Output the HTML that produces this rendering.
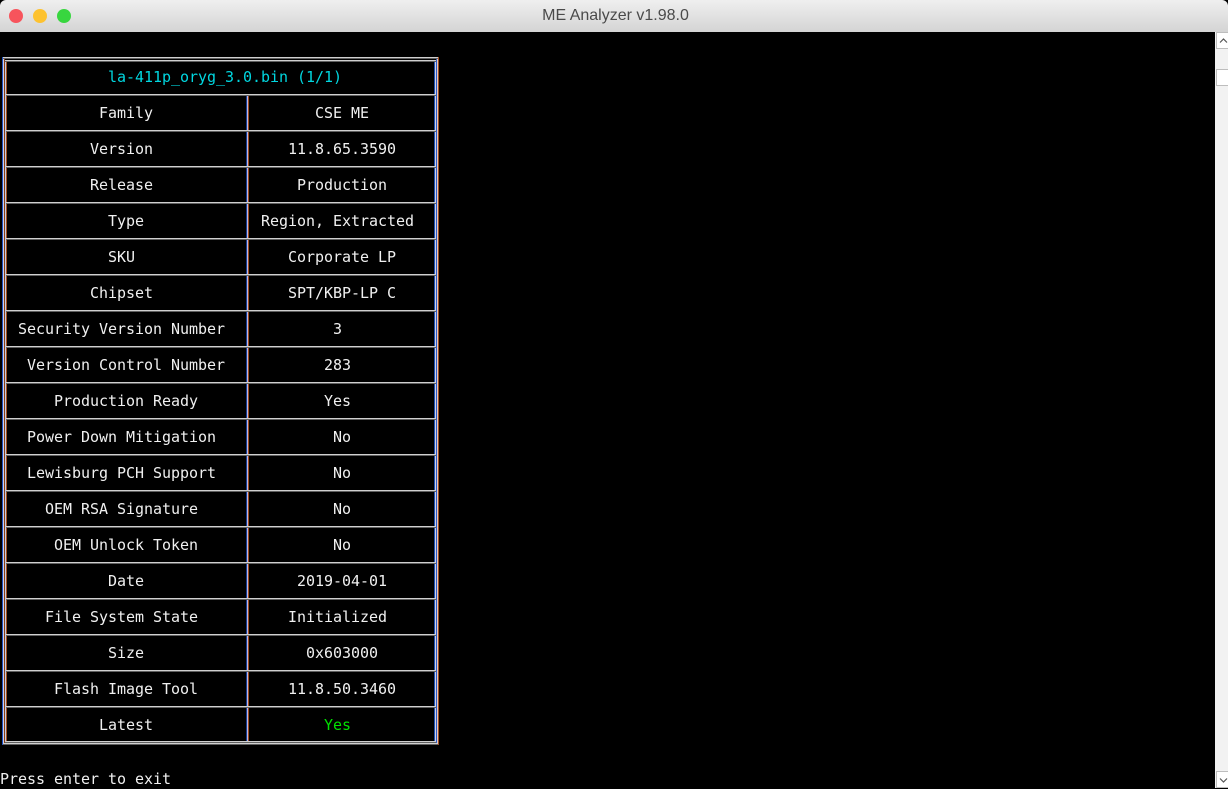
<!DOCTYPE html>
<html>
<head>
<meta charset="utf-8">
<style>
html,body{margin:0;padding:0;background:#000;}
body{position:relative;width:1228px;height:788px;overflow:hidden;}
#tb{position:absolute;left:0;top:0;width:1228px;height:32px;background:linear-gradient(#efefef,#d4d4d4);border-radius:6px 6px 0 0;}
#corner{position:absolute;left:0;top:0;width:1228px;height:32px;background:#000;}
#title{position:absolute;left:0;width:1231px;top:6px;text-align:center;font:16px/20px "Liberation Sans",sans-serif;color:#4a4a4a;}
.dot{position:absolute;top:9px;width:14px;height:14px;border-radius:50%;}
#term{position:absolute;left:0;top:32px;width:1215px;height:756px;background:#000;}
#sb{position:absolute;left:1215px;top:32px;width:13px;height:756px;background:#f2f2f2;}
.btn{position:absolute;left:1px;width:12px;background:#fff;border:1px solid #bdbdbd;border-right:none;box-sizing:border-box;}
.l{position:absolute;height:2px;background:linear-gradient(#d0d0d0 50%,#606060 50%);}
.r{position:absolute;left:6px;width:430px;height:2px;background:linear-gradient(#d0d0d0 50%,#606060 50%);}
.v{position:absolute;width:1px;}
.t{position:absolute;font:15px/20px "DejaVu Sans Mono",monospace;letter-spacing:-0.03px;color:#f0f0f0;white-space:pre;}
</style>
</head>
<body>
<div id="corner"></div>
<div id="tb"></div>
<div id="title">ME Analyzer v1.98.0</div>
<div class="dot" style="left:9px;background:#f7545c"></div>
<div class="dot" style="left:33px;background:#fdc22f"></div>
<div class="dot" style="left:57px;background:#38d63f"></div>
<div id="term"></div>
<div id="sb">
  <div class="btn" style="top:0;height:17px"></div>
  <div class="btn" style="top:37px;height:17px"></div>
  <div class="btn" style="top:739px;height:17px"></div>
  <svg style="position:absolute;left:0;top:0" width="13" height="756">
    <path d="M5 10.5L8.5 7L12 10.5" fill="none" stroke="#555" stroke-width="1.2"/>
    <path d="M5 746.5L8.5 750L12 746.5" fill="none" stroke="#555" stroke-width="1.2"/>
  </svg>
</div>

<!-- outer border -->
<div class="v" style="left:2px;top:57px;height:688px;background:#1f4fc0"></div>
<div class="v" style="left:3px;top:57px;height:688px;background:#d0d0e0"></div>
<div class="v" style="left:4px;top:57px;height:688px;background:#8a3c14"></div>
<div class="v" style="left:5px;top:60px;height:683px;background:#c0cce0"></div>
<div class="v" style="left:6px;top:60px;height:683px;background:#a05024"></div>
<div class="v" style="left:434px;top:60px;height:683px;background:#1f4fb0"></div>
<div class="v" style="left:435px;top:60px;height:683px;background:#d0d0e0"></div>
<div class="v" style="left:436px;top:57px;height:688px;background:#2a58c8"></div>
<div class="v" style="left:437px;top:57px;height:688px;background:#e0c8c0"></div>
<div class="v" style="left:438px;top:57px;height:688px;background:#a04a20"></div>
<div class="l" style="left:3px;top:57px;width:435px"></div>
<div class="l" style="left:3px;top:743px;width:435px"></div>
<div class="l" style="left:5px;top:60px;width:431px"></div>
<div class="l" style="left:5px;top:741px;width:431px"></div>
<!-- middle column -->
<div class="v" style="left:246px;top:95px;height:646px;background:#143a90"></div>
<div class="v" style="left:247px;top:95px;height:646px;background:#b8b8e8"></div>
<div class="v" style="left:248px;top:95px;height:646px;background:#a04a20"></div>
<!-- rows -->
<div class="r" style="top:94px"></div>
<div class="r" style="top:130px"></div>
<div class="r" style="top:166px"></div>
<div class="r" style="top:202px"></div>
<div class="r" style="top:238px"></div>
<div class="r" style="top:274px"></div>
<div class="r" style="top:310px"></div>
<div class="r" style="top:346px"></div>
<div class="r" style="top:382px"></div>
<div class="r" style="top:418px"></div>
<div class="r" style="top:454px"></div>
<div class="r" style="top:490px"></div>
<div class="r" style="top:526px"></div>
<div class="r" style="top:562px"></div>
<div class="r" style="top:598px"></div>
<div class="r" style="top:634px"></div>
<div class="r" style="top:670px"></div>
<div class="r" style="top:706px"></div>

<div class="t" style="left:108px;top:67px;color:#00d7e0">la-411p_oryg_3.0.bin (1/1)</div>
<div class="t" style="left:99px;top:103px">Family</div><div class="t" style="left:315px;top:103px">CSE ME</div>
<div class="t" style="left:90px;top:139px">Version</div><div class="t" style="left:288px;top:139px">11.8.65.3590</div>
<div class="t" style="left:90px;top:175px">Release</div><div class="t" style="left:297px;top:175px">Production</div>
<div class="t" style="left:108px;top:211px">Type</div><div class="t" style="left:261px;top:211px">Region, Extracted</div>
<div class="t" style="left:108px;top:247px">SKU</div><div class="t" style="left:288px;top:247px">Corporate LP</div>
<div class="t" style="left:90px;top:283px">Chipset</div><div class="t" style="left:288px;top:283px">SPT/KBP-LP C</div>
<div class="t" style="left:18px;top:319px">Security Version Number</div><div class="t" style="left:333px;top:319px">3</div>
<div class="t" style="left:27px;top:355px">Version Control Number</div><div class="t" style="left:324px;top:355px">283</div>
<div class="t" style="left:54px;top:391px">Production Ready</div><div class="t" style="left:324px;top:391px">Yes</div>
<div class="t" style="left:27px;top:427px">Power Down Mitigation</div><div class="t" style="left:333px;top:427px">No</div>
<div class="t" style="left:27px;top:463px">Lewisburg PCH Support</div><div class="t" style="left:333px;top:463px">No</div>
<div class="t" style="left:45px;top:499px">OEM RSA Signature</div><div class="t" style="left:333px;top:499px">No</div>
<div class="t" style="left:54px;top:535px">OEM Unlock Token</div><div class="t" style="left:333px;top:535px">No</div>
<div class="t" style="left:108px;top:571px">Date</div><div class="t" style="left:297px;top:571px">2019-04-01</div>
<div class="t" style="left:45px;top:607px">File System State</div><div class="t" style="left:288px;top:607px">Initialized</div>
<div class="t" style="left:108px;top:643px">Size</div><div class="t" style="left:306px;top:643px">0x603000</div>
<div class="t" style="left:54px;top:679px">Flash Image Tool</div><div class="t" style="left:288px;top:679px">11.8.50.3460</div>
<div class="t" style="left:99px;top:715px">Latest</div><div class="t" style="left:324px;top:715px;color:#00e000">Yes</div>
<div class="t" style="left:0;top:769px">Press enter to exit</div>
</body>
</html>
